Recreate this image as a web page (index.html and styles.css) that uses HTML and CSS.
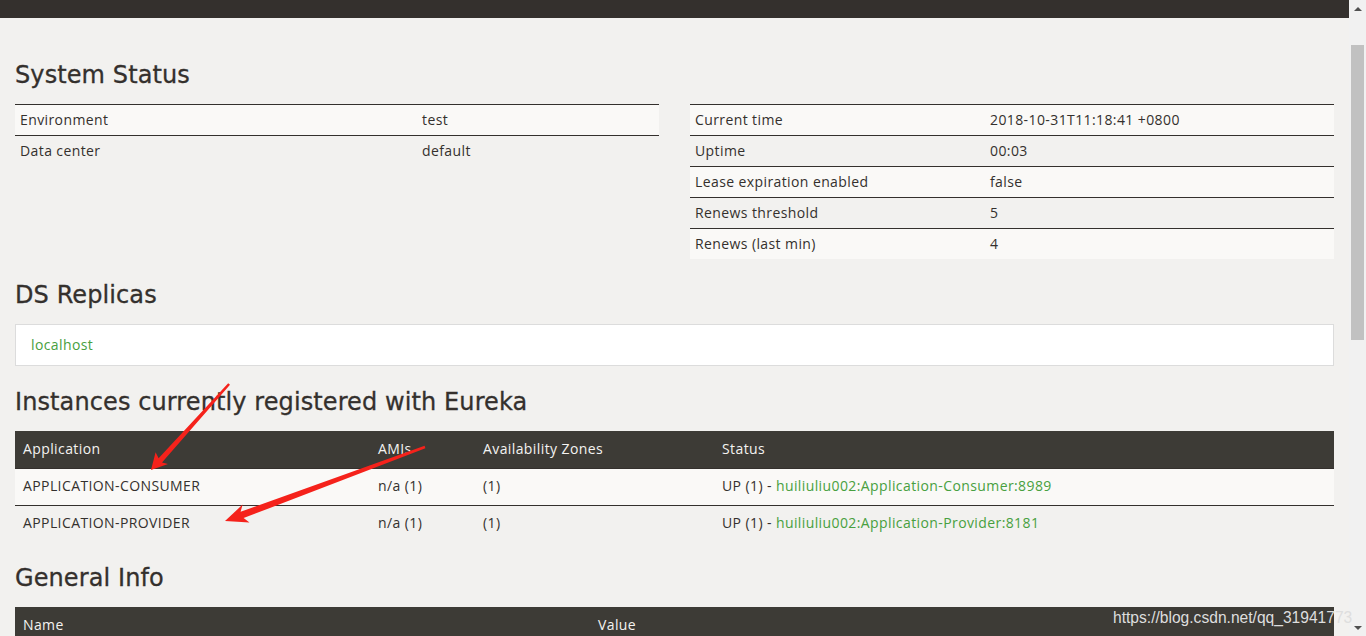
FILE: index.html
```html
<!DOCTYPE html>
<html lang="en">
<head>
<meta charset="utf-8">
<title>Eureka</title>
<link rel="stylesheet" href="styles.css">
</head>
<body>
<div class="window">
  <div class="page">
    <nav class="navbar"></nav>
    <div class="container">
      <h1>System Status</h1>
      <div class="status-row">
        <table class="table condensed striped">
          <tbody>
            <tr><td class="w-left">Environment</td><td>test</td></tr>
            <tr><td class="w-left">Data center</td><td>default</td></tr>
          </tbody>
        </table>
        <table class="table condensed striped">
          <tbody>
            <tr><td class="w-right">Current time</td><td>2018-10-31T11:18:41 +0800</td></tr>
            <tr><td class="w-right">Uptime</td><td>00:03</td></tr>
            <tr><td class="w-right">Lease expiration enabled</td><td>false</td></tr>
            <tr><td class="w-right">Renews threshold</td><td>5</td></tr>
            <tr><td class="w-right">Renews (last min)</td><td>4</td></tr>
          </tbody>
        </table>
      </div>

      <h1>DS Replicas</h1>
      <ul class="list-group">
        <li class="list-group-item"><a href="#">localhost</a></li>
      </ul>

      <h1>Instances currently registered with Eureka</h1>
      <table class="table striped dark-head">
        <thead>
          <tr>
            <th class="c-app">Application</th>
            <th class="c-ami">AMIs</th>
            <th class="c-az">Availability Zones</th>
            <th>Status</th>
          </tr>
        </thead>
        <tbody>
          <tr>
            <td>APPLICATION-CONSUMER</td>
            <td>n/a (1)</td>
            <td>(1)</td>
            <td>UP (1) - <a href="#">huiliuliu002:Application-Consumer:8989</a></td>
          </tr>
          <tr>
            <td>APPLICATION-PROVIDER</td>
            <td>n/a (1)</td>
            <td>(1)</td>
            <td>UP (1) - <a href="#">huiliuliu002:Application-Provider:8181</a></td>
          </tr>
        </tbody>
      </table>

      <h1>General Info</h1>
      <table class="table striped dark-head">
        <thead>
          <tr>
            <th class="c-name">Name</th>
            <th>Value</th>
          </tr>
        </thead>
        <tbody>
          <tr><td>total-avail-memory</td><td>227mb</td></tr>
          <tr><td>environment</td><td>test</td></tr>
        </tbody>
      </table>
    </div>
  </div>
  <div class="scrollbar">
    <div class="sb-button"><span class="tri-up"></span></div>
    <div class="sb-track"><div class="sb-thumb"></div></div>
    <div class="sb-button"><span class="tri-down"></span></div>
  </div>
</div>

<svg class="annotations" width="1366" height="636" viewBox="0 0 1366 636" aria-hidden="true">
  <polygon fill="#f5221b" points="230,384.8 162,462.6 168,464 151,470 155.6,452.3 158.6,458.3 228.2,383.2"/>
  <polygon fill="#f5221b" points="425.4,448.2 243.6,518.1 249.5,522.5 225,521 242.6,504.6 240.6,511.8 424.6,445.8"/>
</svg>
<div class="watermark">https://blog.csdn.net/qq_31941773</div>
</body>
</html>
```

FILE: styles.css
```css
html, body {
  margin: 0;
  padding: 0;
}

body {
  position: relative;
  width: 1366px;
  height: 636px;
  overflow: hidden;
  background: #f2f1ef;
  color: #34302d;
  font-family: "Open Sans", "Noto Sans", sans-serif;
  font-size: 14px;
  line-height: 20px;
  letter-spacing: 0.4px;
}

.window {
  display: flex;
  height: 636px;
}

.page {
  flex: 1;
  min-width: 0;
  overflow: hidden;
}

.navbar {
  height: 18px;
  background: #34302d;
}

.container {
  padding: 21px 15px 0;
}

h1 {
  margin: 19px 0 14px;
  padding-top: 2px;
  font-family: "DejaVu Sans", "Open Sans", sans-serif;
  font-weight: normal;
  font-size: 24px;
  line-height: 30px;
  color: #34302d;
  letter-spacing: 0.1px;
  -webkit-text-stroke: 0.3px #34302d;
}

.status-row {
  display: grid;
  grid-template-columns: 644px 644px;
  column-gap: 31px;
  align-items: start;
}

.table {
  width: 100%;
  border-collapse: separate;
  border-spacing: 0;
  table-layout: fixed;
}

.table td,
.table th {
  text-align: left;
  vertical-align: top;
  padding: 8px;
  font-weight: normal;
  white-space: nowrap;
}

.table td {
  border-top: 1px solid #34302d;
}

.dark-head tbody td {
  padding: 7px 8px 9px;
}

.table.condensed td {
  padding: 5px;
}

.table.striped tbody tr:nth-child(odd) td {
  background: #faf9f7;
}

.w-left { width: 392px; }
.w-right { width: 285px; }

.dark-head thead th {
  background: #3d3b36;
  color: #f4f3f1;
  border-bottom: 1px solid #3d3b36;
}

.c-app { width: 339px; }
.c-ami { width: 89px; }
.c-az { width: 223px; }
.c-name { width: 559px; }

a {
  color: #48a040;
  text-decoration: none;
}

.list-group {
  list-style: none;
  margin: 0;
  padding: 0;
}

.list-group-item {
  background: #ffffff;
  border: 1px solid #dcdcdc;
  padding: 10px 15px;
}

/* scrollbar */
.scrollbar {
  width: 17px;
  flex: 0 0 17px;
  display: flex;
  flex-direction: column;
  background: #f1f1f1;
}

.sb-button {
  height: 17px;
  display: flex;
  align-items: center;
  justify-content: center;
}

.tri-up {
  width: 0;
  height: 0;
  border-left: 4px solid transparent;
  border-right: 4px solid transparent;
  border-bottom: 4px solid #505050;
}

.tri-down {
  width: 0;
  height: 0;
  border-left: 4px solid transparent;
  border-right: 4px solid transparent;
  border-top: 4px solid #505050;
}

.sb-track {
  flex: 1;
  padding: 28px 2px 0;
}

.sb-thumb {
  height: 295px;
  background: #c1c1c1;
}

/* overlays from the screenshot */
.annotations {
  position: absolute;
  top: 0;
  left: 0;
  pointer-events: none;
}

.watermark {
  position: absolute;
  left: 1113px;
  top: 608px;
  font-family: "Liberation Sans", Arial, sans-serif;
  font-size: 15.6px;
  line-height: 20px;
  letter-spacing: 0;
  color: #dedede;
  white-space: nowrap;
  pointer-events: none;
}
```
